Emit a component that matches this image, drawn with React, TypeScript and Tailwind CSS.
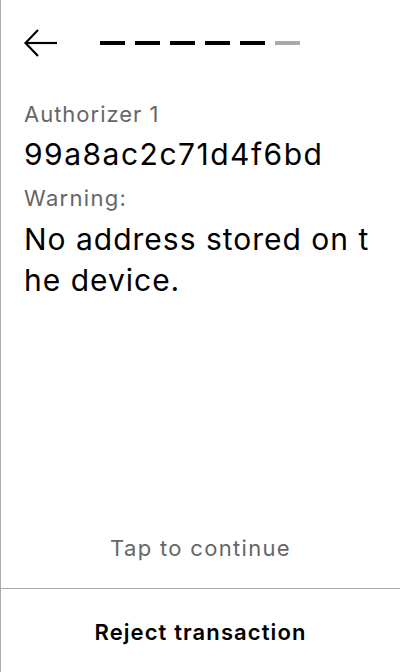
import React from 'react';

const steps = [true, true, true, true, true, false];

const BackArrow = () => (
  <svg width="34" height="28" viewBox="0 0 34 28" fill="none" stroke="#000" strokeWidth="2.2">
    <path d="M33 14H2" />
    <path d="M14 1L1.5 14L14 27" />
  </svg>
);

const App = () => {
  return (
    <div className="w-[400px] h-[672px] bg-white border-l border-[#aaaaaa] flex flex-col font-['Inter',sans-serif] text-black">
      <div className="flex items-center h-[86px] pl-[23px]">
        <BackArrow />
        <div className="flex gap-[10px] ml-[42px] -mt-[1px]">
          {steps.map((done, i) => (
            <div key={i} className={done ? 'w-[25px] h-[4px] bg-black' : 'w-[25px] h-[4px] bg-[#aaaaaa]'} />
          ))}
        </div>
      </div>

      <div className="flex-1 px-[23px] pt-[14px]">
        <p className="text-[22px] leading-[28px] tracking-[0.045em] text-[#666666]">Authorizer 1</p>
        <p className="text-[30px] leading-[40px] tracking-[0.05em] mt-[6px]">99a8ac2c71d4f6bd</p>
        <p className="text-[22px] leading-[28px] tracking-[0.06em] text-[#666666] mt-[10px]">Warning:</p>
        <p className="text-[30px] leading-[41px] tracking-[0.033em] mt-[7px] break-all">No address stored on the device.</p>
      </div>

      <div className="text-center text-[22px] leading-[28px] tracking-[0.06em] text-[#666666] pb-[26px]">Tap to continue</div>

      <div className="border-t border-[#aaaaaa] h-[84px] pt-[3px] flex items-center justify-center">
        <span className="text-[22px] font-semibold tracking-[0.05em]">Reject transaction</span>
      </div>
    </div>
  );
};

export default App;
